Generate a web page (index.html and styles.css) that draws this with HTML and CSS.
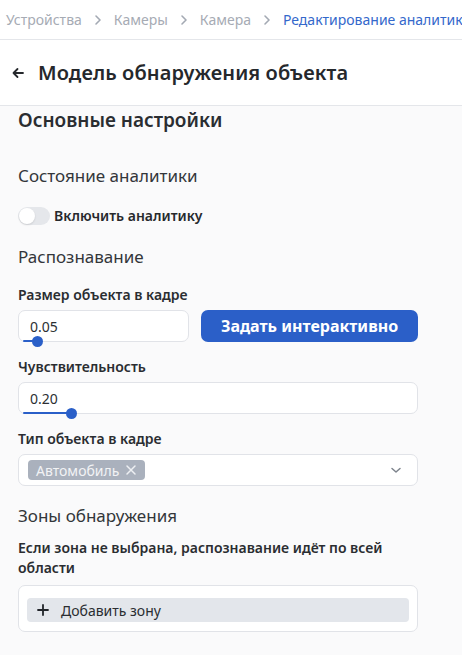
FILE: index.html
```html
<!DOCTYPE html>
<html lang="ru">
<head>
<meta charset="utf-8">
<link rel="stylesheet" href="styles.css">
</head>
<body>
<div class="page">
  <nav class="crumbs">
    <span class="crumb">Устройства</span>
    <svg class="sep" width="16" height="16" viewBox="0 0 16 16"><path d="M6 4l4 4-4 4" fill="none" stroke="#a3a9b3" stroke-width="1.6" stroke-linecap="round" stroke-linejoin="round"/></svg>
    <span class="crumb">Камеры</span>
    <svg class="sep" width="16" height="16" viewBox="0 0 16 16"><path d="M6 4l4 4-4 4" fill="none" stroke="#a3a9b3" stroke-width="1.6" stroke-linecap="round" stroke-linejoin="round"/></svg>
    <span class="crumb">Камера</span>
    <svg class="sep" width="16" height="16" viewBox="0 0 16 16"><path d="M6 4l4 4-4 4" fill="none" stroke="#a3a9b3" stroke-width="1.6" stroke-linecap="round" stroke-linejoin="round"/></svg>
    <span class="crumb active">Редактирование аналитики</span>
  </nav>
  <header class="head">
    <svg class="back" width="14" height="14" viewBox="0 0 14 14"><path d="M12 7H2.5M6.5 3L2.5 7l4 4" fill="none" stroke="#25282c" stroke-width="1.8" stroke-linecap="round" stroke-linejoin="round"/></svg>
    <h1 class="title">Модель обнаружения объекта</h1>
  </header>
  <main class="content">
    <h2 class="section">Основные настройки</h2>
    <h3 class="group first">Состояние аналитики</h3>
    <label class="toggle-row">
      <span class="toggle"><span class="knob"></span></span>
      <span class="toggle-label">Включить аналитику</span>
    </label>
    <h3 class="group">Распознавание</h3>
    <div class="field first-field">
      <div class="label">Размер объекта в кадре</div>
      <div class="row">
        <div class="input small">
          <span class="value">0.05</span>
          <span class="slider"><span class="fill" style="width:14px"></span><span class="thumb" style="left:14px"></span></span>
        </div>
        <button class="btn">Задать интерактивно</button>
      </div>
    </div>
    <div class="field">
      <div class="label">Чувствительность</div>
      <div class="input">
        <span class="value">0.20</span>
        <span class="slider"><span class="fill" style="width:48px"></span><span class="thumb" style="left:48px"></span></span>
      </div>
    </div>
    <div class="field">
      <div class="label">Тип объекта в кадре</div>
      <div class="input select">
        <span class="chip">Автомобиль
          <svg width="12" height="12" viewBox="0 0 12 12"><path d="M2 2l8 8M10 2l-8 8" stroke="#eef0f3" stroke-width="1.5" stroke-linecap="round"/></svg>
        </span>
        <svg class="chev" width="14" height="14" viewBox="0 0 14 14"><path d="M3 5.5l4 3.5 4-3.5" fill="none" stroke="#7d838c" stroke-width="1.5" stroke-linecap="round" stroke-linejoin="round"/></svg>
      </div>
    </div>
    <h3 class="group zones">Зоны обнаружения</h3>
    <p class="hint">Если зона не выбрана, распознавание идёт по всей области</p>
    <div class="zone-box">
      <button class="add">
        <svg width="12" height="12" viewBox="0 0 12 12"><path d="M6 1v10M1 6h10" stroke="#22252a" stroke-width="1.8" stroke-linecap="round"/></svg>
        <span>Добавить зону</span>
      </button>
    </div>
  </main>
</div>
</body>
</html>
```

FILE: styles.css
```css
* { box-sizing: border-box; }
html, body { margin: 0; padding: 0; }
body {
  font-family: "Noto Sans", "Open Sans", sans-serif;
  background: #fafafb;
  color: #26292d;
  width: 462px;
  overflow: hidden;
}
.page { width: 462px; }
.crumbs {
  height: 40px;
  background: #ffffff;
  border-bottom: 1px solid #e4e6ea;
  display: flex;
  align-items: center;
  gap: 8px;
  padding-left: 6px;
  white-space: nowrap;
  overflow: hidden;
  font-size: 14px;
}
.crumb { color: #a6abb4; }
.crumb.active { color: #3468cb; }
.sep { flex: none; }
.head {
  height: 66px;
  background: #ffffff;
  border-bottom: 1px solid #e4e6ea;
  display: flex;
  align-items: center;
  padding-left: 11px;
  gap: 13px;
}
.back { flex: none; }
.title {
  margin: 0;
  font-size: 20px;
  font-weight: 600;
  color: #25282c;
  letter-spacing: 0.1px;
}
.content {
  padding: 0 44px 0 18px;
}
.section {
  margin: 1px 0 0;
  font-size: 19px;
  font-weight: 600;
  line-height: 26px;
  color: #2a2d31;
}
.group {
  margin: 0;
  font-size: 17px;
  font-weight: 400;
  line-height: 24px;
  color: #33363a;
}
.group.first { margin-top: 31px; }
.toggle-row {
  display: flex;
  align-items: center;
  gap: 4px;
  margin-top: 18px;
  margin-bottom: 20px;
}
.toggle {
  width: 32px;
  height: 18px;
  border-radius: 9px;
  background: #e5e7eb;
  position: relative;
  flex: none;
}
.knob {
  position: absolute;
  left: 1px;
  top: 1px;
  width: 16px;
  height: 16px;
  border-radius: 50%;
  background: #ffffff;
  box-shadow: 0 1px 2px rgba(0,0,0,0.12);
}
.toggle-label {
  font-size: 14px;
  font-weight: 600;
  color: #26292d;
}
.field { margin-top: 15px; }
.field.first-field { margin-top: 16px; }
.label {
  font-size: 14px;
  font-weight: 600;
  line-height: 20px;
  color: #2a2d31;
  margin-bottom: 5px;
}
.row { display: flex; gap: 12px; align-items: center; }
.input {
  position: relative;
  height: 32px;
  border: 1px solid #e1e3e8;
  border-radius: 7px;
  background: #ffffff;
  display: flex;
  align-items: center;
  padding-left: 11px;
}
.input.small { width: 171px; }
.value { font-size: 14px; color: #2c2f33; }
.slider {
  position: absolute;
  left: 4px;
  right: 4px;
  bottom: 0;
  height: 0;
}
.fill {
  position: absolute;
  left: 0;
  top: -1px;
  height: 2px;
  background: #2a5fc8;
  border-radius: 1px;
}
.thumb {
  position: absolute;
  top: -5px;
  width: 11px;
  height: 11px;
  margin-left: -5px;
  border-radius: 50%;
  background: #2a5fc8;
}
.btn {
  width: 217px;
  height: 32px;
  border: none;
  border-radius: 7px;
  background: #2b5fc8;
  color: #ffffff;
  font-family: inherit;
  font-size: 16px;
  font-weight: 700;
  padding: 0;
}
.select {
  padding-left: 9px;
  padding-right: 14px;
  justify-content: space-between;
}
.chip {
  display: inline-flex;
  align-items: center;
  gap: 6px;
  height: 20px;
  padding: 0 8px 0 8px;
  border-radius: 4px;
  background: #aab1bd;
  color: #f2f3f5;
  font-size: 14px;
}
.chev { flex: none; }
.zones { margin-top: 18px; }
.hint {
  margin: 10px 0 0;
  font-size: 14px;
  font-weight: 600;
  line-height: 20px;
  color: #2a2d31;
}
.zone-box {
  margin-top: 7px;
  height: 47px;
  border: 1px solid #e1e3e8;
  border-radius: 7px;
  background: #ffffff;
  padding: 12px 8px 0;
}
.add {
  width: 100%;
  height: 24px;
  border: none;
  border-radius: 4px;
  background: #e3e6eb;
  display: flex;
  align-items: center;
  gap: 12px;
  padding: 0 0 0 10px;
  font-family: inherit;
  font-size: 14px;
  color: #2a2d31;
}
```
